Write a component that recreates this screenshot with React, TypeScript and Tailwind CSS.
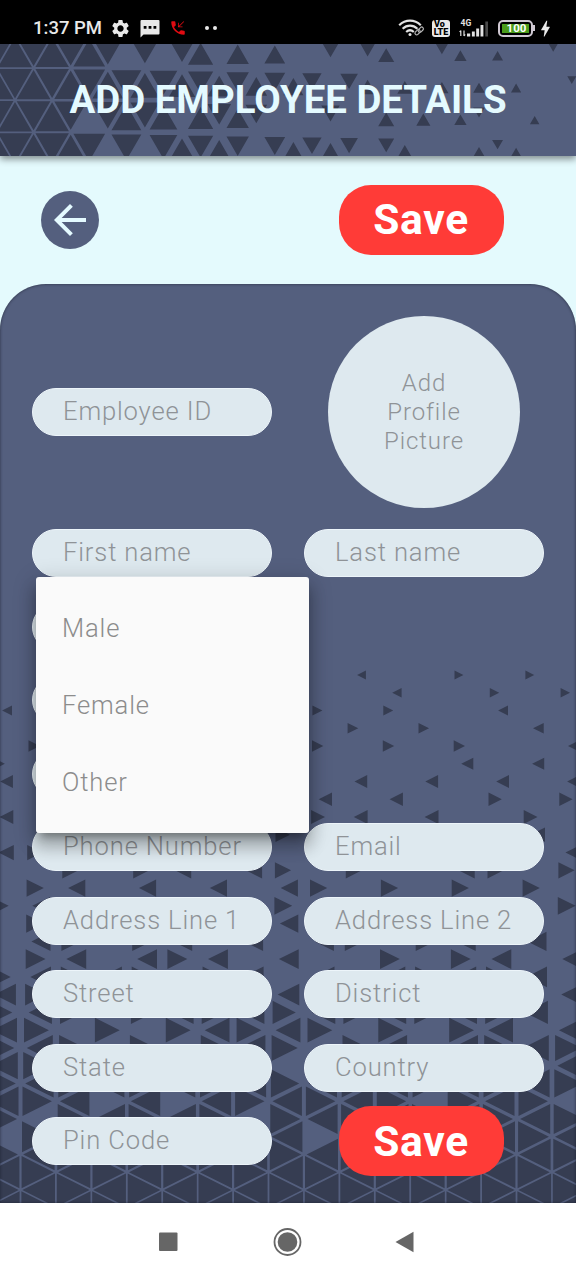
import type { ReactNode } from "react";
import { MdArrowBack, MdBolt, MdPhoneCallback, MdSettings } from "react-icons/md";

type Stop = [number, number];

function interpolate(stops: Stop[], v: number): number {
  if (v <= stops[0][0]) return stops[0][1];
  for (let i = 1; i < stops.length; i++) {
    const [a, sa] = stops[i - 1];
    const [b, sb] = stops[i];
    if (v <= b) return sa + ((sb - sa) * (v - a)) / (b - a);
  }
  return stops[stops.length - 1][1];
}

function poly(points: number[][], cx: number, cy: number, s: number): string {
  return (
    "M" +
    points
      .map(([x, y]) => `${(cx + (x - cx) * s).toFixed(1)} ${(cy + (y - cy) * s).toFixed(1)}`)
      .join("L") +
    "Z"
  );
}

// Header mosaic: four bands of triangles that shrink towards the right.
const HEADER_STOPS: Stop[] = [
  [0, 0.92], [60, 0.9], [100, 0.84], [150, 0.77], [200, 0.68], [240, 0.6],
  [311, 0.52], [349, 0.475], [385, 0.43], [460, 0.33], [552, 0.24],
];
const HEADER_BANDS: number[][] = [
  [-1, 0, 1, 2, 3, 4, 5, 7, 9, 10, 12, 14, 17, 19, 20, 23, 24, 26, 29],
  [-1, 0, 1, 2, 3, 4, 5, 6, 7, 8, 9, 10, 11, 12, 13, 14, 15, 16, 18, 19, 21, 23, 25, 27, 30],
  [-1, 0, 1, 2, 3, 5, 6, 7, 8, 10, 11, 12, 13, 17, 20, 22, 24, 25, 28],
  [-1, 0, 1, 2, 3, 4, 6, 8, 9, 10, 11, 12, 14, 15, 16, 17, 18, 20, 21, 25, 26, 27],
];

function headerPath(): string {
  return HEADER_BANDS.map((cols, r) =>
    cols
      .map((c) => {
        const cx = 15 + 18.56 * c;
        const top = -8 + 32.1 * r;
        const bottom = top + 32.1;
        const up = (r + c) % 2 === 0;
        const s = interpolate(HEADER_STOPS, cx);
        return up
          ? poly([[cx - 18.56, bottom], [cx + 18.56, bottom], [cx, top]], cx, bottom - 10.7, s)
          : poly([[cx - 18.56, top], [cx + 18.56, top], [cx, bottom]], cx, top + 10.7, s);
      })
      .join(""),
  ).join("");
}

// Panel mosaic: rows are listed from the bottom edge upwards.
const PANEL_STOPS: Stop[] = [
  [675, 0.25], [710, 0.28], [746, 0.32], [781, 0.36], [817, 0.39], [852, 0.43], [888, 0.485],
  [924, 0.52], [959, 0.56], [995, 0.61], [1030, 0.7], [1066, 0.77], [1101, 0.83], [1137, 0.87],
  [1190, 0.925],
];
const ALL = [-1, 0, 1, 2, 3, 4, 5, 6, 7, 8, 9, 10, 11, 12, 13, 14, 15];
const PANEL_ROWS: number[][] = [
  ALL,
  ALL,
  ALL,
  ALL,
  ALL.filter((i) => i !== -1 && i !== 8),
  ALL.filter((i) => i !== 0 && i !== 6),
  [-1, 0, 1, 3, 5, 6, 7, 8, 9, 10, 12, 13, 14],
  ALL,
  [-1, 0, 15],
  [-1, 0, 1, 3, 5, 6, 7, 9, 10, 12, 13, 14, 15],
  [-1, 0, 2, 4, 5, 6, 7, 8, 10, 12, 13, 15],
  [-1, 0, 1, 3, 4, 5, 6, 7, 8, 9, 10, 11, 12, 13, 14],
  [-1, 0, 7, 15],
  [-1, 0, 1, 2, 3, 5, 6, 8, 10, 11, 12, 13, 14],
  [0, 1, 3, 4, 5, 7, 10, 12, 13, 15],
  [0, 1, 3, 4, 6, 8, 9, 11, 12, 14],
  [0, 7],
  [-1, 0, 7, 15],
  [0, 1, 3, 5, 7, 8, 10, 12, 14],
  [1, 3, 4, 6, 7, 9, 12, 13, 15],
  [-1, 0, 15],
  [7, 14],
  [-1, 8, 9, 11, 14],
  [8, 10, 13, 15],
  [-1, 9, 11, 13, 15],
  [-1, 12, 14],
  [0, 8, 10, 12, 15],
  [9, 11, 14],
  [-1, 8, 10, 13],
  [10, 13, 15],
  [9, 12, 14],
];

function panelPath(): string {
  return PANEL_ROWS.map((strips, n) => {
    const j = n - 1;
    const y = 1190 - 17.76 * j;
    const s = interpolate(PANEL_STOPS, y);
    const cy = y - 284;
    return strips
      .map((i) => {
        const x0 = 20.5 + 35.43 * i;
        const x1 = x0 + 35.43;
        const left = (i + j) % 2 === 0;
        return left
          ? poly([[x0, cy], [x1, cy - 17.76], [x1, cy + 17.76]], x1 - 11.81, cy, s)
          : poly([[x1, cy], [x0, cy - 17.76], [x0, cy + 17.76]], x0 + 11.81, cy, s);
      })
      .join("");
  }).join("");
}

function StatusBar() {
  return (
    <div className="flex h-11 shrink-0 items-end justify-between bg-black pl-[33px] pr-[20px] text-[#e9e9e9]">
      <div className="flex h-8 items-center">
        <span className="w-[69px] whitespace-nowrap text-[18.500px] font-medium leading-none">1:37 PM</span>
        <MdSettings className="ml-[8px] size-[21px]" />
        <svg className="ml-[9px] h-[19px] w-[20px]" viewBox="0 0 20 19">
          <path d="M1.500 1h17a1 1 0 0 1 1 1v12.500a1 1 0 0 1-1 1H3.500L.500 18.500V2a1 1 0 0 1 1-1z" fill="#e9e9e9" />
          <path d="M3.700 7h2.800v2.800H3.700zM8.600 7h2.800v2.800H8.600zM13.500 7h2.800v2.800h-2.800z" fill="#000" />
        </svg>
        <MdPhoneCallback className="ml-[9px] size-[18px] text-[#e00b12]" />
        <span className="ml-[18px] size-[4px] rounded-full bg-[#e9e9e9]" />
        <span className="ml-[4px] size-[4px] rounded-full bg-[#e9e9e9]" />
      </div>
      <div className="flex h-8 items-center">
        <svg className="h-[18px] w-[27px]" viewBox="0 0 27 18" fill="none" stroke="#e2e2e2" strokeWidth="2.2">
          <path d="M1.2 6.2C7.5 .2 16.5 .2 22.8 6.2M4.6 9.8C9 5.6 15 5.6 19.4 9.8M8.2 13c2.400-2.200 5.200-2.200 7.600 0" />
          <circle cx="12" cy="15.500" r="1.500" fill="#e2e2e2" stroke="none" />
          <g stroke="#b5b5b5" strokeWidth="1.200">
            <rect x="16.600" y="11.500" width="6" height="3.400" rx="1.700" transform="rotate(-45 19.600 13.200)" />
            <rect x="19.800" y="9" width="6" height="3.400" rx="1.700" transform="rotate(-45 22.800 10.700)" />
          </g>
        </svg>
        <span className="ml-[7px] flex h-[17px] w-[18px] flex-col items-center justify-center rounded-[3px] bg-[#e9e9e9] text-[9px] font-black leading-[8px] text-black">
          <span className="pr-[3px]">Vo</span>
          <span>LTE</span>
        </span>
        <svg className="ml-[9px] h-[19px] w-[31px]" viewBox="0 0 31 19" fill="#e2e2e2">
          <text x="1.500" y="7" fontSize="8.500" fontWeight="700" fontFamily="Roboto, sans-serif">4G</text>
          <path d="M1.800 11.500v5.500M.6 13l1.200-1.500M5 17v-5.500M6.200 15.500L5 17" stroke="#e2e2e2" strokeWidth="1.200" fill="none" />
          <path d="M8 14.500h3.200v3H8zM12.900 12.500h2.900v5h-2.900zM17.200 9.500h2.900v8h-2.900zM21.500 6h2.900v11.500h-2.900z" />
          <path d="M26.300 2.500h2.700v15h-2.700z" fill="#4a4a4a" />
        </svg>
        <span className="ml-[8px] flex h-[17px] w-[35px] items-center justify-center rounded-[5px] border-2 border-[#cfc8d2] p-[2px]">
          <span className="flex h-full w-full items-center justify-center bg-[#4a9c1c] pl-[2px] pt-[2px] text-[11.500px] font-bold leading-none text-white">
            100
          </span>
        </span>
        <span className="h-[6px] w-[2px] bg-[#cfc8d2]" />
        <MdBolt className="size-[21px]" />
      </div>
    </div>
  );
}

function Field({ label = "" }: { label?: string }) {
  return (
    <div className="flex h-12 w-[240px] items-center whitespace-nowrap rounded-full border border-[#edf5fa] bg-[#dee9ef] pb-[0.400px] pl-[30px] text-[25.600px] font-light leading-none tracking-[0.850px] text-[#8f9397]">
      {label}
    </div>
  );
}

function SaveButton() {
  return (
    <button className="flex h-[70px] w-[165px] shrink-0 items-center justify-center rounded-[32px] bg-[#ff3b37] pr-px pt-px text-[42.500px] font-bold leading-none tracking-[0.700px] text-white">
      Save
    </button>
  );
}

function Row({ children }: { children: ReactNode }) {
  return (
    <div className="grid h-12 grid-cols-[240px_240px] grid-rows-[48px] items-center gap-x-8">{children}</div>
  );
}

export default function App() {
  return (
    <div className="flex h-[1280px] w-[576px] flex-col overflow-hidden bg-[#e4fafd] font-['Roboto',sans-serif]">
      <StatusBar />
      <header className="relative z-10 flex h-28 shrink-0 items-center justify-center bg-[#545f7e] shadow-[0_3px_7px_rgba(0,0,0,0.45)]">
        <svg className="absolute inset-0 h-28 w-[576px]" viewBox="0 0 576 112">
          <path d={headerPath()} fill="#363d52" />
        </svg>
        <h1 className="relative whitespace-nowrap text-[38.400px] font-bold leading-none text-[#e4faff]">
          ADD EMPLOYEE DETAILS
        </h1>
      </header>

      <div className="flex h-32 shrink-0 items-center justify-between pl-[41px] pr-[72px]">
        <button className="flex size-[58px] items-center justify-center rounded-full bg-[#545f7e] text-[#e4faff]">
          <MdArrowBack className="size-12" />
        </button>
        <SaveButton />
      </div>

      <main className="relative flex h-[919px] shrink-0 flex-col rounded-t-[46px] bg-[#545f7e] px-8 pt-8">
        <svg className="absolute inset-0 h-[919px] w-[576px]" viewBox="0 0 576 919">
          <path d={panelPath()} fill="#363d52" />
        </svg>
        <div className="pointer-events-none absolute inset-0 rounded-t-[46px] shadow-[inset_0_0_3px_rgba(24,28,44,0.75)]" />

        <div className="relative grid h-48 grid-cols-[240px_240px] items-center gap-x-8">
          <Field label="Employee ID" />
          <div className="flex size-48 items-center justify-center justify-self-center rounded-full bg-[#dee9ef] text-center text-2xl font-light leading-[29px] tracking-[0.900px] text-[#8f9397]">
            Add
            <br />
            Profile
            <br />
            Picture
          </div>
        </div>

        <div className="relative mt-[21px] flex flex-col gap-[25.550px]">
          <Row>
            <Field label="First name" />
            <Field label="Last name" />
          </Row>
          <Row>
            <Field />
          </Row>
          <Row>
            <Field />
          </Row>
          <Row>
            <Field />
          </Row>
          <Row>
            <Field label="Phone Number" />
            <Field label="Email" />
          </Row>
          <Row>
            <Field label="Address Line 1" />
            <Field label="Address Line 2" />
          </Row>
          <Row>
            <Field label="Street" />
            <Field label="District" />
          </Row>
          <Row>
            <Field label="State" />
            <Field label="Country" />
          </Row>
          <Row>
            <Field label="Pin Code" />
            <div className="flex items-center pl-[35px]">
              <SaveButton />
            </div>
          </Row>
        </div>

        <ul className="absolute left-9 top-[293px] h-64 w-[273px] rounded-[3px] bg-[#fafafa] py-[12.800px] text-[25.600px] font-light tracking-[0.850px] text-[#8c8c8c] shadow-[0_8px_8px_-5px_rgba(0,0,0,0.3),0_13px_16px_2px_rgba(0,0,0,0.2),0_5px_22px_3px_rgba(0,0,0,0.16)]">
          {["Male", "Female", "Other"].map((option) => (
            <li key={option} className="flex h-[76.800px] items-center pl-[26px]">
              {option}
            </li>
          ))}
        </ul>
      </main>

      <nav className="flex h-[77px] shrink-0 items-center bg-white">
        <svg className="h-[77px] w-[576px]" viewBox="0 0 576 77" fill="#666">
          <rect x="159" y="29.500" width="18.500" height="18.500" rx="1" />
          <circle cx="287.500" cy="39" r="13" fill="none" stroke="#666" strokeWidth="1.800" />
          <circle cx="287.500" cy="39" r="9.800" />
          <path d="M395.500 39L413.500 28.700V49.300Z" />
        </svg>
      </nav>
    </div>
  );
}
